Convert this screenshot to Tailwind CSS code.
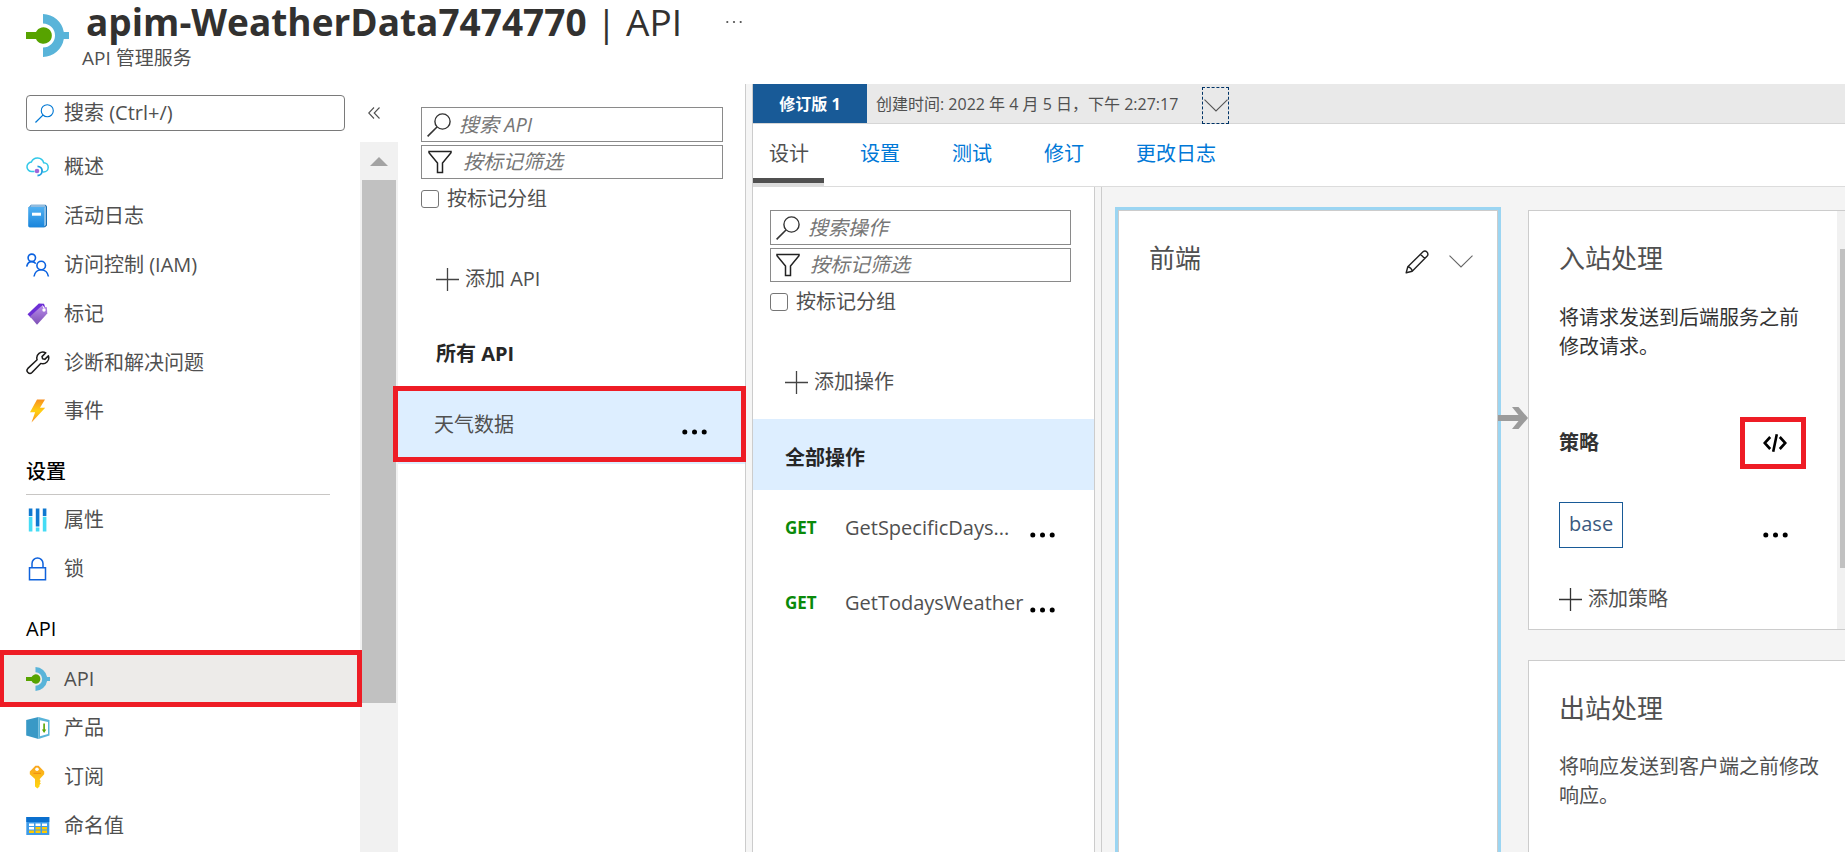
<!DOCTYPE html>
<html lang="zh-CN">
<head>
<meta charset="utf-8">
<meta name="viewport" content="width=device-width, initial-scale=1">
<title>apim-WeatherData7474770 | API</title>
<script src="https://cdn.jsdelivr.net/npm/@tailwindcss/browser@4"></script>
</head>
<body class="flex h-screen flex-col overflow-hidden bg-white font-['Open_Sans','Noto_Sans_CJK_SC',sans-serif] text-[20px] leading-7 text-[#505050]">

<svg class="hidden" aria-hidden="true">
  <symbol id="apim" viewBox="0 0 43 43">
    <path d="M17 0a21.500 21.500 0 0 1 20.800 18H43v7h-5.200A21.500 21.500 0 0 1 17 43v-9.500a12 12 0 0 0 0-24z" fill="#59b4d9"/>
    <path d="M0 18h10a8.300 8.300 0 1 1 0 7H0z" fill="#57a300"/>
  </symbol>
  <symbol id="search" viewBox="0 0 24 24"><circle cx="15.500" cy="8.500" r="7.600" fill="none" stroke="currentColor" stroke-width="1.400"/><path d="M10 14 .6 23.400" stroke="currentColor" stroke-width="1.600"/></symbol>
  <symbol id="filter" viewBox="0 0 24 24"><path d="M1 1.500h22v1.200L14.500 13v9.500h-5V13L1 2.700z" fill="none" stroke="currentColor" stroke-width="1.500"/></symbol>
  <symbol id="plus" viewBox="0 0 23 23"><path d="M0 11.500h23M11.500 0v23" stroke="currentColor" stroke-width="1.300"/></symbol>
  <symbol id="dots" viewBox="0 0 25 6"><circle cx="2.800" cy="3" r="2.500"/><circle cx="12.500" cy="3" r="2.500"/><circle cx="22.200" cy="3" r="2.500"/></symbol>
  <symbol id="chevron" viewBox="0 0 24 13"><path d="M.5.700 12 12 23.500.700" fill="none" stroke="currentColor" stroke-width="1.100"/></symbol>
</svg>

<header class="flex h-[84px] shrink-0 gap-[13px] pl-[26px]">
  <svg class="mt-[14px] h-[43px] w-[43px] shrink-0"><use href="#apim"/></svg>
  <div>
    <div class="flex items-center">
      <h1 class="pl-1 text-[37px] leading-[44px] text-[#323130]"><span class="font-bold">apim-WeatherData7474770</span> <span>| API</span></h1>
      <button type="button" aria-label="更多" class="ml-11 text-[#505050]"><svg class="h-1 w-4" viewBox="0 0 16 4" fill="currentColor"><circle cx="1.300" cy="2" r="1.100"/><circle cx="8" cy="2" r="1.100"/><circle cx="14.700" cy="2" r="1.100"/></svg></button>
    </div>
    <p class="text-[19px] leading-7">API 管理服务</p>
  </div>
</header>

<div class="flex min-h-0 flex-1">

  <aside class="flex w-[398px] shrink-0 flex-col">
    <div class="flex items-center pt-[11px] pb-[11px] pl-[26px]">
      <label class="flex h-9 w-[319px] items-center gap-2.5 rounded-sm border border-[#7a7a7a] pl-2">
        <svg class="h-[19px] w-[19px] shrink-0 text-[#0078d4]"><use href="#search"/></svg>
        <input type="text" aria-label="搜索" placeholder="搜索 (Ctrl+/)" class="w-full min-w-0 bg-transparent outline-none placeholder:text-[#505050]">
      </label>
      <button type="button" aria-label="折叠菜单" class="ml-[23px]"><svg class="h-3 w-3" viewBox="0 0 12 12" fill="none" stroke="#505050" stroke-width="1.100"><path d="M6 .5.700 6 6 11.500M11.500.500 6.200 6l5.300 5.500"/></svg></button>
    </div>
    <div class="flex min-h-0 flex-1">
      <nav class="flex-1" aria-label="服务菜单">
        <ul>
          <li><a href="#" class="flex h-[49px] items-center gap-[14px] pl-[26px]">
            <svg class="h-6 w-6" viewBox="0 0 24 24" fill="none"><path d="M8.500 16.500H6a4.700 4.700 0 0 1-.6-9.400A6.500 6.500 0 0 1 17.700 7.700 4.600 4.600 0 0 1 17.500 16.900H17" stroke="#32c8e8" stroke-width="1.500"/><path d="M11.500 11.300a4.600 4.600 0 0 1 0 9.200" stroke="#1e9de0" stroke-width="1.800"/><circle cx="11" cy="16" r="2.300" fill="#a067da"/></svg>
            <span>概述</span></a></li>
          <li><a href="#" class="flex h-[49px] items-center gap-[14px] pl-[26px]">
            <svg class="h-6 w-6" viewBox="0 0 24 24"><defs><linearGradient id="book" x1="0" y1="0" x2="0" y2="1"><stop stop-color="#50b0f2"/><stop offset="1" stop-color="#1a85db"/></linearGradient></defs><path d="M5 .8h14.500L21 2.300v19.200L19 23.200H3.500V2.500z" fill="#1c6db0"/><path d="M5.200 1.200h14v1.600H4z" fill="#b6d6ef"/><path d="M18 3.500 20 2v19l-2 1.500z" fill="#8dbfe6"/><path d="M2.200 3h15.900v20.200H3.300A1.200 1.200 0 0 1 2.200 22z" fill="url(#book)"/><path d="M6 8.700h9v3H6z" fill="#fff"/></svg>
            <span>活动日志</span></a></li>
          <li><a href="#" class="flex h-[49px] items-center gap-[14px] pl-[26px]">
            <svg class="h-6 w-6" viewBox="0 0 24 24" fill="none" stroke="#0b62e0" stroke-width="1.600"><circle cx="5.800" cy="4.800" r="3.700"/><path d="M.7 13.600c.6-3 2.600-5 5.100-5 1.900 0 3 .6 4 2"/><circle cx="15.200" cy="12.500" r="4.300"/><path d="M8 23.500c.6-4 3.700-6.700 7.200-6.700s6.600 2.700 7.200 6.700"/></svg>
            <span>访问控制 (IAM)</span></a></li>
          <li><a href="#" class="flex h-[49px] items-center gap-[14px] pl-[26px]">
            <svg class="h-6 w-6" viewBox="0 0 24 24"><defs><linearGradient id="tag" x1="0" y1="0" x2="0" y2="1"><stop stop-color="#b78be8"/><stop offset="1" stop-color="#7d4fb5"/></linearGradient></defs><path d="M1.500 12.300 12.800 1.400l5.200.300 1 3L4.800 15.800z" fill="#6d2fd5"/><path d="M4 14.500 15.500 4l5.400 1.300.400 6.200L11 22.800z" fill="url(#tag)"/><circle cx="18" cy="8" r="1.700" fill="#fff"/><path d="M16.500 3.500 18 6.200" stroke="#fff" stroke-width="1"/></svg>
            <span>标记</span></a></li>
          <li><a href="#" class="flex h-[49px] items-center gap-[14px] pl-[26px]">
            <svg class="h-6 w-6" viewBox="0 0 24 24" fill="none" stroke="#1b1a19" stroke-width="1.500" stroke-linejoin="round"><path d="M19.800 1.800 16 5.600l.6 2.200 2.200.6L22.400 4.800a6 6 0 0 1-7.700 7.600L6 21.500a2.900 2.900 0 0 1-4.100-4.100l9.200-8.600a6 6 0 0 1 8.700-7z"/></svg>
            <span>诊断和解决问题</span></a></li>
          <li><a href="#" class="flex h-12 items-center gap-[14px] pl-[26px]">
            <svg class="h-6 w-6" viewBox="0 0 24 24"><defs><linearGradient id="bolt" x1="0" y1="0" x2="0" y2="1"><stop stop-color="#f8901f"/><stop offset=".5" stop-color="#ffd012"/><stop offset="1" stop-color="#f8901f"/></linearGradient></defs><path d="M11 .6h8l-5 8.200h5.200L5.500 23.500l3.600-10.200H4z" fill="url(#bolt)"/></svg>
            <span>事件</span></a></li>
        </ul>
        <h2 class="mr-[30px] ml-[26px] border-b border-[#c8c6c4] pt-[23px] pb-2 font-medium text-black">设置</h2>
        <ul>
          <li><a href="#" class="flex h-[49px] items-center gap-[14px] pl-[26px]">
            <svg class="h-6 w-6" viewBox="0 0 24 24" stroke-width="3.600"><path d="M4.600.500v7.500M11.600.500v18M18.600.500v7.500" stroke="#0f78d0"/><path d="M4.600 8.800v14.700M11.600 19.500v4M18.600 8.800v14.700" stroke="#45dcf5"/></svg>
            <span>属性</span></a></li>
          <li><a href="#" class="flex h-[49px] items-center gap-[14px] pl-[26px]">
            <svg class="h-6 w-6" viewBox="0 0 24 24" fill="none" stroke="#0f62dc" stroke-width="1.500"><path d="M3.500 10.700h16v12h-16zM6 10.500V6.500a5.500 5.500 0 0 1 11 0v4"/></svg>
            <span>锁</span></a></li>
        </ul>
        <h2 class="mr-[30px] mb-0.5 ml-[26px] border-b border-[#c8c6c4] pt-[22px] pb-2 font-medium text-black">API</h2>
        <ul>
          <li class="relative"><a href="#" aria-current="page" class="flex h-[49px] items-center gap-[14px] bg-[#edebe9] pl-[26px]">
            <svg class="h-6 w-6"><use href="#apim"/></svg>
            <span>API</span></a>
            <span class="pointer-events-none absolute -top-1 -right-0.5 -bottom-1 left-0 z-10 border-[5px] border-l-4 border-[#ee1c25]"></span></li>
          <li><a href="#" class="flex h-[49px] items-center gap-[14px] pl-[26px]">
            <svg class="h-6 w-6" viewBox="0 0 24 24"><path d="M.2 4 12.500 1v22L.2 19.500z" fill="#3999c6"/><path d="M12.500 1 23.500 4v15.500L12.500 23z" fill="#59b4d9"/><path d="M14 4.300 22 6v12l-8 2.200z" fill="#fff"/><path d="M17.300 7.500h1.600v6h1.400l-2.200 3.500-2.200-3.500h1.400z" fill="#57a300"/></svg>
            <span>产品</span></a></li>
          <li><a href="#" class="flex h-[49px] items-center gap-[14px] pl-[26px]">
            <svg class="h-6 w-6" viewBox="0 0 24 24"><defs><linearGradient id="key" x1="0" y1="0" x2="0" y2="1"><stop stop-color="#f9a51f"/><stop offset="1" stop-color="#ffd70f"/></linearGradient></defs><path d="M9.400.800h3.200L18.200 6.400v2.800L13.800 14v1l1 1-1 1.200 1 1.300-1.300 1.500v1.500L11.400 23.600 9 21.600V14L3.800 9.200V6.400z" fill="url(#key)"/><circle cx="11" cy="4.200" r="1.800" fill="#fff"/><path d="M7.500 8.300h7.500" stroke="#f08a10" stroke-width="1"/></svg>
            <span>订阅</span></a></li>
          <li><a href="#" class="flex h-[49px] items-center gap-[14px] pl-[26px]">
            <svg class="h-6 w-6" viewBox="0 0 24 24"><path d="M.3 3h23v18H.3z" fill="#3f9be8"/><path d="M.3 3h23v5H.3z" fill="#0a6fce"/><path d="M3 9.500h5v2.500H3zM9.500 9.500h5v2.500h-5zM16 9.500h5v2.500h-5zM3 13h5v2.500H3z" fill="#fff"/><path d="M9.500 13h5v2.500h-5zM16 13h5v2.500h-5zM3 16.500h5V19H3zM9.500 16.500h5V19h-5zM16 16.500h5V19h-5z" fill="#ffca00"/></svg>
            <span>命名值</span></a></li>
        </ul>
      </nav>
      <div class="flex w-[38px] shrink-0 flex-col items-center bg-[#f1f1f1]" aria-hidden="true">
        <svg class="mt-[15px] mb-[14px] h-[9px] w-[18px] shrink-0" viewBox="0 0 18 9"><path d="M0 9 9 0l9 9z" fill="#a3a3a3"/></svg>
        <div class="h-[523px] w-[34px] bg-[#c1c1c1]"></div>
      </div>
    </div>
  </aside>

  <section class="w-[348px] shrink-0 border-r border-[#ccc]" aria-label="API 列表">
    <div class="pt-[23px] pr-[22px] pl-[23px]">
      <label class="flex h-[35px] items-center gap-2 border border-[#8a8a8a] pl-[5px]">
        <svg class="h-6 w-6 shrink-0 text-[#333]"><use href="#search"/></svg>
        <input type="text" aria-label="搜索 API" placeholder="搜索 API" class="w-full min-w-0 bg-transparent italic outline-none placeholder:text-[#767676]">
      </label>
      <label class="mt-[3px] flex h-[34px] items-center gap-[11px] border border-[#8a8a8a] pl-[6px]">
        <svg class="h-6 w-6 shrink-0 text-[#222]"><use href="#filter"/></svg>
        <input type="text" aria-label="按标记筛选" placeholder="按标记筛选" class="w-full min-w-0 bg-transparent italic outline-none placeholder:text-[#767676]">
      </label>
      <label class="mt-1.5 flex h-7 items-center gap-2">
        <input type="checkbox" class="h-[18px] w-[18px] appearance-none rounded-[3px] border border-[#767676] bg-white">
        <span>按标记分组</span>
      </label>
      <button type="button" class="mt-[52px] ml-[15px] flex h-7 items-center gap-1.5"><svg class="h-[23px] w-[23px] text-[#444]"><use href="#plus"/></svg>添加 API</button>
    </div>
    <a href="#" class="mt-[27px] flex h-[67px] items-center pl-[38px] font-bold text-[#262626]">所有 API</a>
    <div class="relative flex h-[77px] items-center justify-between bg-[#def] pr-[38px] pb-0.5 pl-[36px]">
      <a href="#">天气数据</a>
      <button type="button" aria-label="更多" class="pt-[14px] text-black"><svg class="h-1.5 w-[25px]" fill="currentColor"><use href="#dots"/></svg></button>
      <span class="pointer-events-none absolute -top-px -right-px bottom-0.5 -left-[5px] z-10 border-[5px] border-[#ee1c25]"></span>
    </div>
  </section>

  <main class="ml-1.5 flex min-w-0 flex-1 flex-col border-l border-[#ccc] bg-white shadow-[-6px_0_0_#f5f5f5]">
    <div class="flex h-10 shrink-0 border-b border-[#d6d6d6] bg-[#e9e9e9] text-[16px]">
      <div class="flex w-[114px] items-center justify-center bg-[#185a97] font-bold text-white">修订版 1</div>
      <div class="flex items-center pl-[9px] whitespace-nowrap">创建时间: 2022 年 4 月 5 日，下午 2:27:17</div>
      <button type="button" aria-label="选择修订版" class="mt-[3px] -mb-px ml-6 flex w-[27px] items-center justify-center border border-dashed border-[#003366] text-[#555]"><svg class="h-[13px] w-6"><use href="#chevron"/></svg></button>
    </div>
    <nav class="flex h-[63px] shrink-0 items-stretch gap-5 border-b border-[#dcdcdc]" aria-label="API 选项卡">
      <a href="#" aria-current="page" class="mb-[3px] border-b-[5px] border-[#505050] pt-4 pr-[15px] pl-4 shadow-[0_4px_0_#dcdcdc]">设计</a>
      <a href="#" class="px-4 pt-4 text-[#0078d7]">设置</a>
      <a href="#" class="px-4 pt-4 text-[#0078d7]">测试</a>
      <a href="#" class="px-4 pt-4 text-[#0078d7]">修订</a>
      <a href="#" class="px-4 pt-4 text-[#0078d7]">更改日志</a>
    </nav>

    <div class="flex min-h-0 flex-1">
      <section class="w-[342px] shrink-0 border-r border-[#ccc]" aria-label="操作">
        <div class="pt-[23px] pr-[23px] pl-[17px]">
          <label class="flex h-[35px] items-center gap-2 border border-[#8a8a8a] pl-[5px]">
            <svg class="h-6 w-6 shrink-0 text-[#333]"><use href="#search"/></svg>
            <input type="text" aria-label="搜索操作" placeholder="搜索操作" class="w-full min-w-0 bg-transparent italic outline-none placeholder:text-[#767676]">
          </label>
          <label class="mt-[3px] flex h-[34px] items-center gap-2.5 border border-[#8a8a8a] pl-[5px]">
            <svg class="h-6 w-6 shrink-0 text-[#222]"><use href="#filter"/></svg>
            <input type="text" aria-label="按标记筛选操作" placeholder="按标记筛选" class="w-full min-w-0 bg-transparent italic outline-none placeholder:text-[#767676]">
          </label>
          <label class="mt-1.5 flex h-7 items-center gap-2">
            <input type="checkbox" class="h-[18px] w-[18px] appearance-none rounded-[3px] border border-[#767676] bg-white">
            <span>按标记分组</span>
          </label>
          <button type="button" class="mt-[52px] ml-[15px] flex h-7 items-center gap-1.5"><svg class="h-[23px] w-[23px] text-[#444]"><use href="#plus"/></svg>添加操作</button>
        </div>
        <a href="#" class="mt-[23px] flex h-[71px] items-center bg-[#def] pt-1.5 pl-8 font-bold text-[#262626]">全部操作</a>
        <div class="flex h-[75px] items-center pl-8">
          <span class="w-[60px] shrink-0 text-[17px] font-bold text-[#0a8a0a]">GET</span>
          <a href="#" class="w-[180px]">GetSpecificDays...</a>
          <button type="button" aria-label="更多" class="ml-[5px] pt-[14px] text-black"><svg class="h-1.5 w-[25px]" fill="currentColor"><use href="#dots"/></svg></button>
        </div>
        <div class="flex h-[75px] items-center pl-8">
          <span class="w-[60px] shrink-0 text-[17px] font-bold text-[#0a8a0a]">GET</span>
          <a href="#" class="w-[180px]">GetTodaysWeather</a>
          <button type="button" aria-label="更多" class="ml-[5px] pt-[14px] text-black"><svg class="h-1.5 w-[25px]" fill="currentColor"><use href="#dots"/></svg></button>
        </div>
      </section>

      <div class="ml-1.5 flex min-w-0 flex-1 border-l border-[#ccc] bg-[#f4f4f4] pt-5 pl-[13px] shadow-[-6px_0_0_#f5f5f5]">
        <section class="w-[386px] shrink-0 border-[3px] border-b-0 border-[#9bd5f2]">
          <div class="flex h-full items-start border border-b-0 border-[#ccc] bg-white pt-[29px] pr-6 pl-[30px]">
            <h2 class="flex-1 text-[26px] leading-9">前端</h2>
            <button type="button" aria-label="编辑" class="mt-2.5"><svg class="h-6 w-6" viewBox="0 0 24 24" fill="none" stroke="#222" stroke-width="1.400" stroke-linejoin="round"><path d="M1.200 22.800 2.800 16.800 18 1.800a3 3 0 0 1 4.200 4.200L7.200 21.200zM15.500 4.300l4.200 4.200M2.800 16.800c2 .2 4.200 2.300 4.400 4.400"/></svg></button>
            <button type="button" aria-label="展开" class="mt-[15px] ml-5 text-[#666]"><svg class="h-[13px] w-6"><use href="#chevron"/></svg></button>
          </div>
        </section>
        <svg class="z-10 mt-[200px] -ml-[3px] h-[22px] w-[30px] shrink-0" viewBox="0 0 30 22" fill="#9b9b9b"><path d="M0 8h20.500L14 0h6.500L30 11l-9.500 11H14l6.500-8H0z"/></svg>
        <div class="mt-[3px] flex min-w-0 flex-1 flex-col gap-[30px]">
          <section class="flex border border-r-0 border-[#ccc] bg-white">
            <div class="min-w-0 flex-1 pt-[29px] pr-[31px] pb-4 pl-[30px]">
              <h2 class="text-[26px] leading-9">入站处理</h2>
              <p class="mt-[27px] leading-[29px] text-[#333]">将请求发送到后端服务之前修改请求。</p>
              <div class="mt-[56px] flex h-[52px] items-center justify-between">
                <h3 class="font-bold text-[#333]">策略</h3>
                <button type="button" aria-label="代码编辑器" class="flex h-[52px] w-[66px] items-center justify-center border-[5px] border-[#ee1c25] pl-1"><svg class="h-[18px] w-6" viewBox="0 0 24 18" fill="none" stroke="#000" stroke-width="2.600"><path d="M7.200 3 1.700 9l5.500 6M16.800 3l5.500 6-5.500 6M13.800.300 10.200 17.700"/></svg></button>
              </div>
              <div class="mt-[33px] flex items-center justify-between pr-[18px]">
                <a href="#" class="flex h-[46px] items-center border border-[#185a97] px-[9px] pb-0.5 text-[#3b5a80]">base</a>
                <button type="button" aria-label="更多" class="pt-5 text-black"><svg class="h-1.5 w-[25px]" fill="currentColor"><use href="#dots"/></svg></button>
              </div>
              <button type="button" class="mt-[37px] flex h-7 items-center gap-1.5"><svg class="h-[23px] w-[23px] text-[#333]"><use href="#plus"/></svg>添加策略</button>
            </div>
            <div class="w-2 bg-[#f1f1f1] pt-[38px] pl-[3px]" aria-hidden="true"><div class="h-[319px] bg-[#c1c1c1]"></div></div>
          </section>
          <section class="flex-1 border border-r-0 border-b-0 border-[#ccc] bg-white pt-[29px] pr-4 pl-[30px]">
            <h2 class="text-[26px] leading-9">出站处理</h2>
            <p class="mt-[26px] leading-[29px]">将响应发送到客户端之前修改响应。</p>
          </section>
        </div>
      </div>
    </div>
  </main>
</div>
</body>
</html>
